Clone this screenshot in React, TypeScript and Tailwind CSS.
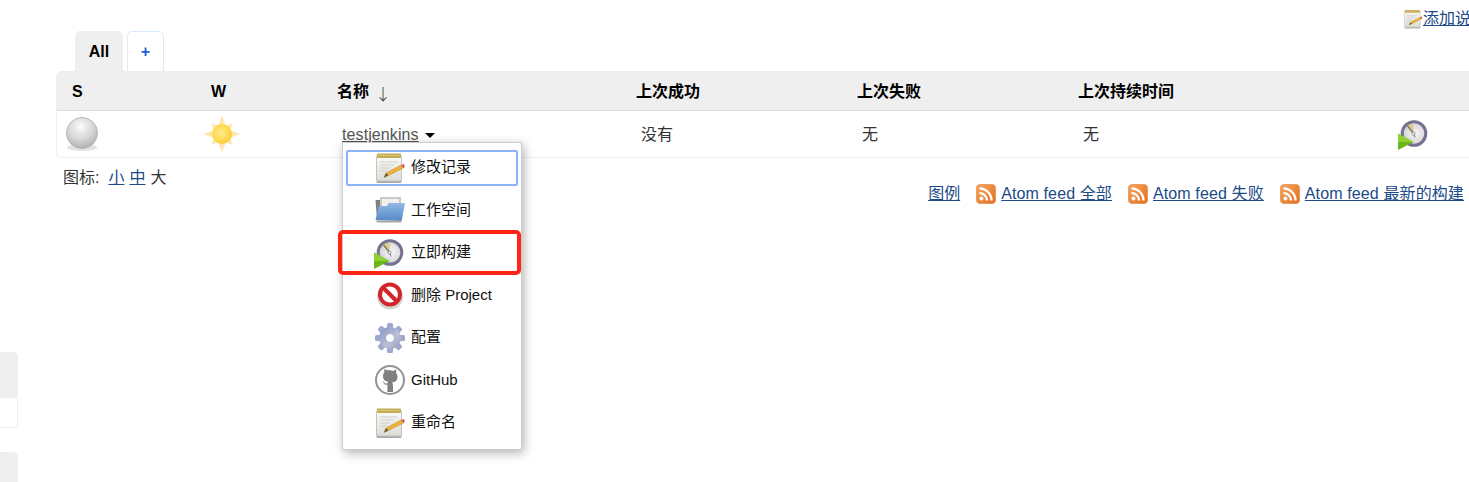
import React from "react";

const FONT = "font-['Liberation_Sans','Noto_Sans_CJK_SC',sans-serif]";

function Notepad({ id, size = 32 }: { id: string; size?: number }) {
  return (
    <svg width={size} height={size} viewBox="0 0 32 32">
      <defs>
        <linearGradient id={id} x1="0" y1="0" x2="0" y2="1">
          <stop offset="0" stopColor="#fbfbf7" />
          <stop offset="1" stopColor="#dcdcd8" />
        </linearGradient>
      </defs>
      <rect x="2.5" y="26" width="25" height="5" rx="1.5" fill="#a9a9a6" />
      <rect x="2.5" y="3" width="25" height="26" rx="2" fill={`url(#${id})`} stroke="#c4c4bf" strokeWidth="1" />
      <rect x="3" y="1.500" width="24" height="4.500" rx="1" fill="#c4ab55" />
      <path d="M4 3.500h22" stroke="#e6d487" strokeWidth="1" strokeDasharray="1.5 1" />
      <path d="M6 10h17M6 13h14M6 16h10M6 19h7" stroke="#cfcfcb" strokeWidth="1.200" />
      <path d="M10 25.500l2-4.500L27 13l2.500 3-15 7.500z" fill="#eeb23c" stroke="#c08c2e" strokeWidth=".5" />
      <path d="M27 13l2.500 3 1.300-1-.8-3z" fill="#d9534f" />
      <path d="M10 25.500l2-4.500 2.500 2.500z" fill="#6d5a3a" />
    </svg>
  );
}

function Folder() {
  return (
    <svg width="32" height="32" viewBox="0 0 32 32">
      <defs>
        <linearGradient id="fold" x1="0" y1="0" x2="0" y2="1">
          <stop offset="0" stopColor="#93b9e6" />
          <stop offset="1" stopColor="#5488c6" />
        </linearGradient>
      </defs>
      <path d="M6 3h21v14H6z" fill="#c9c9c9" />
      <path d="M8 5h17v14H8z" fill="#f0f0ee" />
      <path d="M1.500 6h4.500v20H3z" fill="#7d7f81" />
      <path d="M1.500 26l3.600-14h8l1.500-3H31l-3.400 18z" fill="url(#fold)" />
      <path d="M2 26.500h25.500l-.4 2H3z" fill="#a5a5a5" />
    </svg>
  );
}

function Build({ id, size = 32 }: { id: string; size?: number }) {
  return (
    <svg width={size} height={size} viewBox="0 0 32 32">
      <defs>
        <radialGradient id={id} cx=".55" cy=".5" r=".6">
          <stop offset="0" stopColor="#f6f6f6" />
          <stop offset="1" stopColor="#cdcdd3" />
        </radialGradient>
      </defs>
      <circle cx="16" cy="15.500" r="11.800" fill={`url(#${id})`} stroke="#75718f" strokeWidth="3" />
      <path d="M15.500 15.500L9.500 8A10 10 0 0 1 15.500 5.500z" fill="#dccb8a" />
      <path d="M15.500 15.500L9.500 8" stroke="#7f7a62" strokeWidth="1.400" />
      <path d="M15.500 15.500l1.500 4" stroke="#8a8a92" strokeWidth="1.200" fill="none" />
      <circle cx="15.500" cy="15.500" r="1.500" fill="#fff" stroke="#666" strokeWidth=".7" />
      <path d="M0 15.500l15.500 8.500L0 32z" fill="#6cb61c" />
      <path d="M0 15.500l15.500 8.500H0z" fill="#8fd130" />
    </svg>
  );
}

function NoEntry() {
  return (
    <svg width="32" height="32" viewBox="0 0 32 32">
      <circle cx="16" cy="17.500" r="11" fill="none" stroke="#a0a0a0" strokeWidth="4" opacity=".45" />
      <circle cx="16" cy="15.500" r="10" fill="#fff" stroke="#d3262c" strokeWidth="4" />
      <path d="M9 8.500l14 14" stroke="#d3262c" strokeWidth="4" />
    </svg>
  );
}

function Gear() {
  const teeth = [0, 45, 90, 135, 180, 225, 270, 315];
  return (
    <svg width="32" height="32" viewBox="0 0 32 32">
      <defs>
        <linearGradient id="gear" x1="0" y1="0" x2="1" y2="1">
          <stop offset="0" stopColor="#8193c3" />
          <stop offset=".6" stopColor="#bcc0da" />
          <stop offset="1" stopColor="#9496b6" />
        </linearGradient>
      </defs>
      {teeth.map((a) => (
        <rect key={a} x="13" y="1" width="6" height="8" rx="1.500" fill="#9fa7cb" transform={`rotate(${a} 16 16)`} />
      ))}
      <circle cx="16" cy="16" r="11" fill="url(#gear)" />
      <circle cx="16" cy="16" r="4.500" fill="#fff" stroke="#8a90b2" strokeWidth=".7" />
    </svg>
  );
}

function GitHub() {
  return (
    <svg width="32" height="32" viewBox="0 0 32 32">
      <circle cx="16" cy="16" r="14" fill="#fff" stroke="#929292" strokeWidth="2" />
      <path
        d="M16 6c-1 0-2 .2-2.900.4-1-.8-2.300-1.300-2.700-1.100-.3 1-.3 2.200 0 3-1 1-1.400 2.200-1.400 3.800 0 3.900 2.300 5.300 5.300 5.600-.4.400-.7.900-.8 1.600-.9.400-2.400.5-3.100-.9-.3-.5-.9-1-1.600-1-.4 0-.3.400.2.600.5.400.9.900 1 1.400.5 1 1.800 1.600 3.400 1.200V28h5.600v-6.400c0-1-.3-2-.8-3.300 3-.3 5.300-1.700 5.300-5.600 0-1.600-.4-2.800-1.400-3.800.3-.8.300-2 0-3-.4-.2-1.700.3-2.700 1.100-.9-.2-1.900-.4-2.900-.4z"
        fill="#808080"
      />
    </svg>
  );
}

function Rss({ id }: { id: string }) {
  return (
    <svg width="20" height="20" viewBox="0 0 20 20">
      <defs>
        <linearGradient id={id} x1="0" y1="0" x2="1" y2="1">
          <stop offset="0" stopColor="#f9a45a" />
          <stop offset="1" stopColor="#e2701f" />
        </linearGradient>
      </defs>
      <rect x=".5" y=".5" width="19" height="19" rx="3.500" fill={`url(#${id})`} stroke="#d9803a" strokeWidth=".6" />
      <circle cx="5.500" cy="14.500" r="2" fill="#fff" />
      <path d="M3.500 9a7.500 7.500 0 0 1 7.500 7.500" stroke="#fff" strokeWidth="2.300" fill="none" />
      <path d="M3.500 4.500a12 12 0 0 1 12 12" stroke="#fff" strokeWidth="2.300" fill="none" />
    </svg>
  );
}

function Ball() {
  return (
    <svg width="36" height="36" viewBox="0 0 36 36">
      <defs>
        <radialGradient id="ball" cx=".45" cy=".3" r=".75">
          <stop offset="0" stopColor="#fbfbfb" />
          <stop offset=".55" stopColor="#d6d6d6" />
          <stop offset="1" stopColor="#aaaaaa" />
        </radialGradient>
      </defs>
      <ellipse cx="18" cy="31.500" rx="15" ry="3.500" fill="#cfcfcf" opacity=".6" />
      <circle cx="18" cy="17" r="15.500" fill="url(#ball)" stroke="#b8b8b8" strokeWidth="1" />
    </svg>
  );
}

function Sun() {
  const rays = [0, 45, 90, 135, 180, 225, 270, 315];
  return (
    <svg width="38" height="38" viewBox="0 0 38 38">
      <defs>
        <radialGradient id="sun" cx=".45" cy=".45" r=".6">
          <stop offset="0" stopColor="#ffeb90" />
          <stop offset=".7" stopColor="#ffd84a" />
          <stop offset="1" stopColor="#fbc935" />
        </radialGradient>
      </defs>
      {rays.map((a, i) => (
        <path
          key={a}
          d={i % 2 === 0 ? "M19 0l3.500 10h-7z" : "M19 3.500l3 7h-6z"}
          fill="#fee7b4"
          transform={`rotate(${a} 19 19)`}
        />
      ))}
      <circle cx="19" cy="19" r="10" fill="url(#sun)" />
    </svg>
  );
}

const menu: { label: React.ReactNode; icon: React.ReactNode }[] = [
  { label: "修改记录", icon: <Notepad id="n1" /> },
  { label: "工作空间", icon: <Folder /> },
  { label: "立即构建", icon: <Build id="b1" /> },
  { label: "删除 Project", icon: <NoEntry /> },
  { label: "配置", icon: <Gear /> },
  { label: "GitHub", icon: <GitHub /> },
  { label: "重命名", icon: <Notepad id="n2" /> },
];

function FeedLink({ id, label }: { id: string; label: string }) {
  return (
    <span className="flex items-center gap-[5px]">
      <Rss id={id} />
      <a className="text-[#204a87] underline tracking-[0.12px]">{label}</a>
    </span>
  );
}

export default function App() {
  return (
    <div className={`relative h-[482px] w-[1469px] overflow-hidden bg-white text-[16px] text-[#333] ${FONT}`}>
      {/* left stubs */}
      <div className="absolute left-0 top-[352px] h-[76px] w-[18px] overflow-hidden rounded-r-[5px] border border-l-0 border-[#eeeeee]">
        <div className="h-[45px] bg-[#efefef]" />
      </div>
      <div className="absolute left-0 top-[452px] h-[40px] w-[18px] rounded-tr-[5px] bg-[#efefef]" />

      {/* top-right link */}
      <div className="flex h-[31px] justify-end pt-[8px]">
        <div className="flex h-[22px] w-[65px] items-center overflow-hidden whitespace-nowrap">
          <span className="-ml-px shrink-0"><Notepad id="n3" size={20} /></span>
          <a className="text-[#204a87] underline">添加说明</a>
        </div>
      </div>

      <div className="ml-[56px] w-[1440px]">
        {/* tabs */}
        <div className="flex h-[40px] gap-[4px] pl-[19px]">
          <div className="flex w-[48px] items-center justify-center rounded-t-[5px] bg-[#efefef] pt-[2px] text-[16px] font-bold text-black">All</div>
          <div className="flex w-[37px] items-center justify-center rounded-t-[5px] border border-b-0 border-[#dcebfb] text-[16px] font-bold text-[#1d5fd6]">+</div>
        </div>

        {/* table */}
        <div className="overflow-hidden rounded-[5px] border border-[#eeeeee]">
          <div className="grid h-[39px] grid-cols-[139px_126px_299px_221px_221px_1fr] items-center border-b border-[#dcdcdc] bg-[#efefef] pt-[2px] text-[16px] font-bold text-black">
            <div className="pl-[15px]">S</div>
            <div className="pl-[15px]">W</div>
            <div className="flex items-center pl-[15px]">名称<span className="ml-[6px] pt-[2px] font-['Noto_Sans_CJK_SC',sans-serif] font-light text-[#333]">↓</span></div>
            <div className="pl-[15px]">上次成功</div>
            <div className="pl-[15px]">上次失败</div>
            <div className="pl-[15px]">上次持续时间</div>
          </div>
          <div className="grid h-[46px] grid-cols-[139px_126px_299px_221px_221px_335px_1fr] items-center">
            <div className="pl-[7px]"><Ball /></div>
            <div className="pl-[7px]"><Sun /></div>
            <div className="flex items-center pl-[20px] pt-[2px]">
              <a className="text-[#555] underline tracking-[0.1px]">testjenkins</a>
              <span className="ml-[6px] h-0 w-0 border-x-[5px] border-t-[5px] border-x-transparent border-t-black" />
            </div>
            <div className="pl-[20px] pt-[2px]">没有</div>
            <div className="pl-[20px] pt-[2px]">无</div>
            <div className="pl-[20px] pt-[2px]">无</div>
            <div><Build id="b2" size={32} /></div>
          </div>
        </div>

        {/* below table */}
        <div className="flex w-[1408px] justify-between">
          <div className="flex h-[20px] pl-[7px] pt-[8px] text-[#333]">
            <span>图标:</span>
            <a className="ml-[9px] text-[#204a87] underline">小</a>
            <a className="ml-[5px] text-[#204a87] underline">中</a>
            <span className="ml-[5px]">大</span>
          </div>
          <div className="flex h-[48px] items-center gap-[16px] pt-[24px]">
            <a className="text-[#204a87] underline">图例</a>
            <FeedLink id="r1" label="Atom feed 全部" />
            <FeedLink id="r2" label="Atom feed 失败" />
            <FeedLink id="r3" label="Atom feed 最新的构建" />
          </div>
        </div>
      </div>

      {/* dropdown */}
      <div className="absolute left-[342px] top-[142px] h-[308px] w-[180px] border border-[#cccccc] bg-white pt-[6.5px] text-[15px] text-[#111] shadow-[2px_3px_10px_rgba(0,0,0,0.3)]">
        {menu.map((m, i) => (
          <div
            key={i}
            className={
              i === 0
                ? "mx-[3px] flex h-[36px] items-center rounded-[2px] border-2 border-[#8ab4f8] pl-[26px]"
                : "mx-[3px] mt-[6.5px] flex h-[36px] items-center pl-[28px]"
            }
          >
            <span className="mr-[5px] flex h-[32px] w-[32px] shrink-0 items-center justify-center">{m.icon}</span>
            <span>{m.label}</span>
          </div>
        ))}
      </div>

      {/* red annotation */}
      <div className="pointer-events-none absolute left-[338px] top-[230px] h-[44.500px] w-[183px] rounded-[5px] border-4 border-[#ff2416]" />
    </div>
  );
}
